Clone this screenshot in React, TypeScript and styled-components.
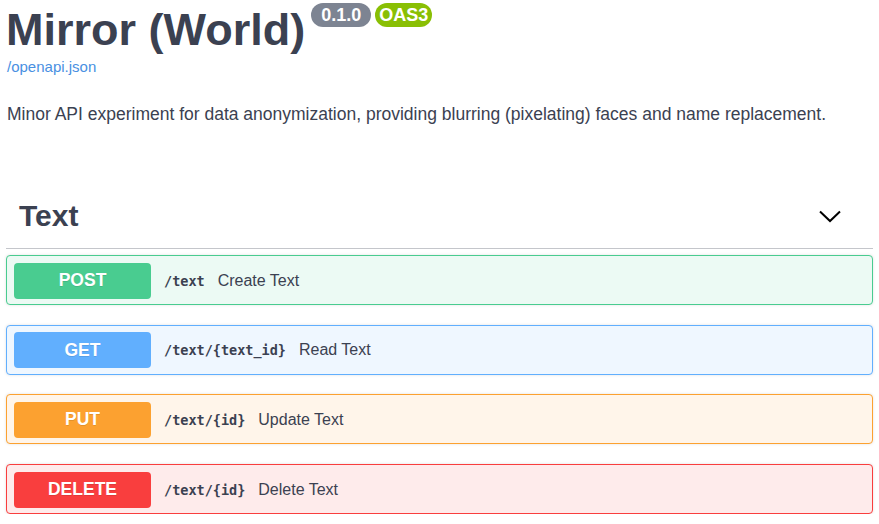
import React from "react";
import styled, { createGlobalStyle } from "styled-components";

const Global = createGlobalStyle`
  html, body { margin: 0; padding: 0; background: #fff; }
  body { font-family: "Liberation Sans", Arial, sans-serif; color: #3b4151; }
`;

const Page = styled.div`
  padding: 0 6px;
`;

const TitleRow = styled.div`
  display: flex;
  align-items: flex-start;
`;

const Title = styled.h2`
  margin: 7px 0 0;
  font-size: 45px;
  line-height: 45px;
  font-weight: 700;
  color: #3b4151;
`;

const Badge = styled.span<{ $bg: string; $px: number; $ml: number }>`
  margin: 3px 0 0 ${(p) => p.$ml}px;
  height: 24px;
  padding: 0 ${(p) => p.$px}px;
  border-radius: 12px;
  background: ${(p) => p.$bg};
  color: #fff;
  font-weight: 700;
  font-size: 18px;
  line-height: 24px;
  display: inline-flex;
  align-items: center;
`;

const Link = styled.a`
  display: block;
  margin-top: 5px;
  font-size: 15px;
  line-height: 20px;
  color: #4990e2;
  text-decoration: none;
  padding-left: 1px;
`;

const Description = styled.p`
  margin: 25px 0 0;
  font-size: 17.5px;
  line-height: 24px;
  color: #3b4151;
  padding-left: 1px;
`;

const Section = styled.section`
  margin-top: 60px;
`;

const TagHeader = styled.div`
  display: flex;
  align-items: center;
  justify-content: space-between;
  padding: 12px 32px 14px 13px;
  border-bottom: 1px solid #c4c6cb;
`;

const TagTitle = styled.h3`
  margin: 0;
  font-size: 30px;
  line-height: 36px;
  font-weight: 700;
  color: #3b4151;
`;

const OpList = styled.div`
  display: flex;
  flex-direction: column;
  gap: 19.7px;
  margin-top: 6px;
`;

const Op = styled.div<{ $c: string; $bg: string }>`
  display: flex;
  align-items: center;
  box-sizing: border-box;
  height: 50px;
  padding: 1px 7px 0;
  border: 1px solid ${(p) => p.$c};
  background: ${(p) => p.$bg};
  border-radius: 4px;
  box-shadow: 0 0 3px rgba(0, 0, 0, 0.12);
`;

const Method = styled.span<{ $c: string }>`
  width: 137px;
  height: 36px;
  border-radius: 4px;
  background: ${(p) => p.$c};
  color: #fff;
  font-weight: 700;
  font-size: 17.5px;
  display: flex;
  align-items: center;
  justify-content: center;
  text-shadow: 0 1px 0 rgba(0, 0, 0, 0.1);
  flex-shrink: 0;
`;

const Path = styled.span`
  margin-left: 13px;
  font-family: "DejaVu Sans Mono", "Liberation Mono", monospace;
  font-weight: 700;
  font-size: 13.5px;
  color: #3b4151;
`;

const Summary = styled.span`
  margin-left: 13px;
  font-size: 16px;
  color: #3b4151;
`;

const ops = [
  { m: "POST", c: "#49cc90", bg: "#ecfaf4", path: "/text", s: "Create Text" },
  { m: "GET", c: "#61affe", bg: "#eff7ff", path: "/text/{text_id}", s: "Read Text" },
  { m: "PUT", c: "#fca130", bg: "#fff5ea", path: "/text/{id}", s: "Update Text" },
  { m: "DELETE", c: "#f93e3e", bg: "#feebeb", path: "/text/{id}", s: "Delete Text" },
];

export default function App() {
  return (
    <Page>
      <Global />
      <TitleRow>
        <Title>Mirror (World)</Title>
        <Badge $bg="#7d8492" $px={10} $ml={6}>0.1.0</Badge>
        <Badge $bg="#89bf04" $px={4} $ml={4}>OAS3</Badge>
      </TitleRow>
      <Link href="#">/openapi.json</Link>
      <Description>
        Minor API experiment for data anonymization, providing blurring (pixelating) faces and name replacement.
      </Description>
      <Section>
        <TagHeader>
          <TagTitle>Text</TagTitle>
          <svg width="22" height="13" viewBox="0 0 22 13">
            <path d="M1 1.5 L11 11 L21 1.5" fill="none" stroke="#000" strokeWidth="2" />
          </svg>
        </TagHeader>
        <OpList>
          {ops.map((o) => (
            <Op key={o.m} $c={o.c} $bg={o.bg}>
              <Method $c={o.c}>{o.m}</Method>
              <Path>{o.path}</Path>
              <Summary>{o.s}</Summary>
            </Op>
          ))}
        </OpList>
      </Section>
    </Page>
  );
}
